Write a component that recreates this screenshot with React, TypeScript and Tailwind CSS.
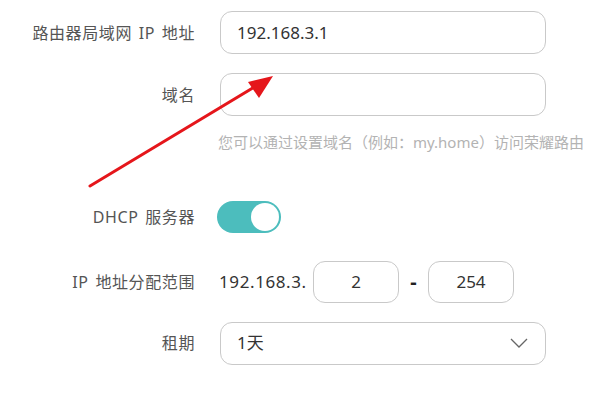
import React from "react";

const font = { fontFamily: '"Noto Sans", "Noto Sans CJK SC", sans-serif' };

function Label({ children }: { children: React.ReactNode }) {
  return (
    <div className="w-[195px] shrink-0 text-right text-[16px] text-[#555] whitespace-nowrap tracking-[0.6px] [word-spacing:2px]">
      {children}
    </div>
  );
}

export default function App() {
  return (
    <div
      className="relative w-[600px] h-[400px] bg-white overflow-hidden"
      style={font}
    >
      <div className="flex flex-col pt-[11px]">
        <div className="flex items-center gap-[25px]">
          <Label>路由器局域网 IP 地址</Label>
          <div className="w-[326px] h-[43px] border border-[#c9c9c9] rounded-[12px] flex items-center px-4 text-[17px] text-[#333]">
            192.168.3.1
          </div>
        </div>
        <div className="flex items-center gap-[25px] mt-[19px]">
          <Label>域名</Label>
          <div className="w-[326px] h-[43px] border border-[#c9c9c9] rounded-[12px]" />
        </div>
        <div className="pl-[218px] mt-[15px] text-[15px] text-[#b3b3b3] whitespace-nowrap">
          您可以通过设置域名（例如：my.home）访问荣耀路由
        </div>
        <div className="flex items-center gap-[22px] mt-[47px]">
          <Label>DHCP 服务器</Label>
          <div className="w-[64px] h-[32px] rounded-full bg-[#4cbdbd] flex items-center justify-end pr-[2px]">
            <div className="w-[28px] h-[28px] rounded-full bg-white" />
          </div>
        </div>
        <div className="flex items-center gap-[24px] mt-[28px]">
          <Label>IP 地址分配范围</Label>
          <div className="flex items-center text-[17px] text-[#333]">
            <span className="w-[89px] tracking-[0.6px]">192.168.3.</span>
            <div className="ml-[5px] w-[86px] h-[42px] border border-[#c9c9c9] rounded-[12px] flex items-center justify-center">
              2
            </div>
            <span className="w-[29px] text-center text-[20px] font-bold text-[#222] leading-none">
              -
            </span>
            <div className="w-[86px] h-[42px] border border-[#c9c9c9] rounded-[12px] flex items-center justify-center">
              254
            </div>
          </div>
        </div>
        <div className="flex items-center gap-[25px] mt-[19px]">
          <Label>租期</Label>
          <div className="w-[326px] h-[43px] border border-[#c9c9c9] rounded-[12px] flex items-center justify-between pl-4 pr-[17px] text-[17px] text-[#333]">
            <span>1天</span>
            <svg width="18" height="10" viewBox="0 0 18 10" fill="none">
              <path d="M1 1 L9 9 L17 1" stroke="#666" strokeWidth="1.3" />
            </svg>
          </div>
        </div>
      </div>
      <svg
        className="absolute left-0 top-0 pointer-events-none"
        width="600"
        height="400"
      >
        <line x1="90" y1="186" x2="256" y2="86" stroke="#e5161b" strokeWidth="3" strokeLinecap="round" />
        <polygon points="273,76 248,82 259,98" fill="#e5161b" />
      </svg>
    </div>
  );
}
